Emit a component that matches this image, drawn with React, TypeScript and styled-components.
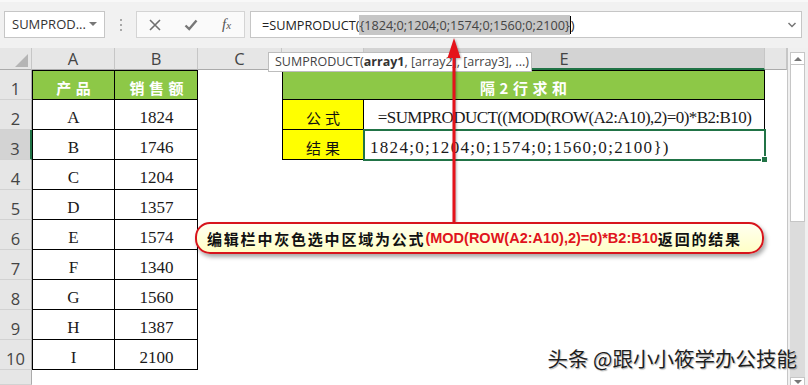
import React from "react";
import styled, { createGlobalStyle, css } from "styled-components";

const UI = `"Open Sans", "Noto Sans", "Noto Sans CJK SC", sans-serif`;
const CJK = `"Noto Sans CJK SC", sans-serif`;
const SONG = `"Liberation Serif", "Noto Sans CJK SC", serif`;
const GREEN = "#8dc847";
const EXCEL = "#217346";
const RED = "#e5131b";

const products = [
  { letter: "A", value: 1824 },
  { letter: "B", value: 1746 },
  { letter: "C", value: 1204 },
  { letter: "D", value: 1357 },
  { letter: "E", value: 1574 },
  { letter: "F", value: 1340 },
  { letter: "G", value: 1560 },
  { letter: "H", value: 1387 },
  { letter: "I", value: 2100 },
];

// column D's letter sits under the function tooltip, so it is left blank
const columns = ["A", "B", "C", "", "E", ""];

const GlobalStyle = createGlobalStyle`
  html, body { margin: 0; padding: 0; }
  body {
    width: 808px;
    height: 385px;
    overflow: hidden;
    background: #fff;
    font-family: ${UI};
  }
`;

export default function App() {
  return (
    <>
      <GlobalStyle />
      <Window>
        <Toolbar>
          <NameBox>
            <span>SUMPROD...</span>
            <Caret />
          </NameBox>
          <Grip>
            <Dot />
            <Dot />
            <Dot />
          </Grip>
          <FxGroup>
            <IconSlot>
              <svg width="12" height="12" viewBox="0 0 12 12">
                <path d="M1 1L11 11M11 1L1 11" stroke="#6f6f6f" strokeWidth="1.6" />
              </svg>
            </IconSlot>
            <IconSlot>
              <svg width="14" height="12" viewBox="0 0 14 12">
                <path d="M1.5 6.5L5.2 10L12.5 1.5" stroke="#777" strokeWidth="2.4" fill="none" />
              </svg>
            </IconSlot>
            <IconSlot>
              <Fx>
                f<small>x</small>
              </Fx>
            </IconSlot>
          </FxGroup>
          <FormulaInput>
            <FormulaText>
              =SUMPRODUCT(<Selected>{"{1824;0;1204;0;1574;0;1560;0;2100}"}</Selected>
              <Cursor />)
            </FormulaText>
            <svg width="10" height="8" viewBox="0 0 10 8">
              <path d="M1.5 2L5 5.5L8.5 2" stroke="#777" strokeWidth="1.5" fill="none" />
            </svg>
          </FormulaInput>
        </Toolbar>

        <Sheet>
          <Corner />
          {columns.map((c, i) => (
            <ColHead key={i} $active={i === 4}>
              {c}
            </ColHead>
          ))}
          <ScrollColumn>
            <ScrollUp />
            <ScrollTrack>
              <ScrollThumb />
            </ScrollTrack>
            <ScrollDown />
          </ScrollColumn>

          <RowHead>1</RowHead>
          <HeadCell $left $top>产品</HeadCell>
          <HeadCell $top>销售额</HeadCell>
          <Blank />
          <HeadCell $left $top $span={2}>隔2行求和</HeadCell>
          <Blank />

          {products.map((p, i) => {
            const r = i + 2;
            return (
              <React.Fragment key={r}>
                <RowHead $active={r === 3}>{r}</RowHead>
                <DataCell $left>{p.letter}</DataCell>
                <DataCell>{p.value}</DataCell>
                <Blank />
                {r === 2 && (
                  <>
                    <LabelCell $left>公式</LabelCell>
                    <DataCell $spacing={-0.57}>=SUMPRODUCT((MOD(ROW(A2:A10),2)=0)*B2:B10)</DataCell>
                  </>
                )}
                {r === 3 && (
                  <>
                    <LabelCell $left>结果</LabelCell>
                    <ActiveCell>{"1824;0;1204;0;1574;0;1560;0;2100})"}</ActiveCell>
                  </>
                )}
                {r > 3 && (
                  <>
                    <Blank />
                    <Blank />
                  </>
                )}
                <Blank />
              </React.Fragment>
            );
          })}

          <RowHead />
          {[0, 1, 2, 3, 4, 5].map((k) => (
            <Blank key={k} />
          ))}
        </Sheet>

        <Tooltip>
          SUMPRODUCT(<b>array1</b>, [array2], [array3], ...)
        </Tooltip>

        <Arrow width="20" height="190" viewBox="0 0 20 190">
          <path d="M10 22V188" stroke={RED} strokeWidth="3" />
          <path d="M10 4L16.5 24H3.5Z" fill={RED} />
        </Arrow>

        <Callout>
          编辑栏中灰色选中区域为公式<RedText>(MOD(ROW(A2:A10),2)=0)*B2:B10</RedText>返回的结果
        </Callout>

        <Watermark>头条 @跟小小筱学办公技能</Watermark>
      </Window>
    </>
  );
}

const Window = styled.div`
  position: relative;
  width: 808px;
  height: 385px;
  display: flex;
  flex-direction: column;
  overflow: hidden;
`;

/* ---------- formula bar ---------- */

const Toolbar = styled.div`
  height: 48px;
  box-sizing: border-box;
  padding: 9px 0 0 4px;
  display: flex;
  align-items: flex-start;
  background: #f1f1f1;
  border-top: 2px solid #f8f8f8;
`;

const NameBox = styled.div`
  width: 101px;
  height: 27px;
  box-sizing: border-box;
  border: 1px solid #c6c6c6;
  background: #fff;
  display: flex;
  align-items: center;
  justify-content: space-between;
  padding: 0 7px 1px 7px;
  font: 13px ${UI};
  color: #333;
`;

const Caret = styled.i`
  width: 0;
  height: 0;
  border-left: 4px solid transparent;
  border-right: 4px solid transparent;
  border-top: 4px solid #777;
`;

const Grip = styled.div`
  width: 31px;
  height: 27px;
  display: flex;
  flex-direction: column;
  align-items: center;
  justify-content: center;
  gap: 3px;
`;

const Dot = styled.i`
  width: 2px;
  height: 2px;
  background: #a8a8a8;
`;

const FxGroup = styled.div`
  width: 109px;
  height: 27px;
  box-sizing: border-box;
  border: 1px solid #d4d4d4;
  background: #fafafa;
  display: grid;
  grid-template-columns: 36px 36px 1fr;
`;

const IconSlot = styled.div`
  display: flex;
  align-items: center;
  justify-content: center;
`;

const Fx = styled.span`
  font: italic 15px "Liberation Serif", serif;
  color: #555;
  small {
    font-size: 11px;
  }
`;

const FormulaInput = styled.div`
  margin-left: 5px;
  width: 552px;
  height: 27px;
  box-sizing: border-box;
  border: 1px solid #c6c6c6;
  background: #fff;
  display: flex;
  align-items: center;
  justify-content: space-between;
  padding: 0 4px 0 11px;
`;

const FormulaText = styled.div`
  font: 12.7px ${UI};
  color: #222;
  display: flex;
  align-items: center;
  white-space: pre;
`;

const Selected = styled.span`
  background: #c6c6c6;
  color: #444;
  line-height: 20px;
`;

const Cursor = styled.i`
  width: 1px;
  height: 18px;
  background: #000;
`;

/* ---------- sheet grid ---------- */

const Sheet = styled.div`
  flex: 1;
  display: grid;
  grid-template-columns: 32px 83px 83px 84px 82px 401px 22px 21px;
  grid-template-rows: 22px repeat(10, 30px) 1fr;
  background: #fff;
`;

const Corner = styled.div`
  position: relative;
  background: #e6e6e6;
  border-right: 1px solid #c6c6c6;
  border-bottom: 1px solid #ababab;
  &::after {
    content: "";
    position: absolute;
    right: 3px;
    bottom: 2px;
    border-left: 13px solid transparent;
    border-bottom: 13px solid #b5b5b5;
  }
`;

const ColHead = styled.div<{ $active?: boolean }>`
  display: flex;
  align-items: center;
  justify-content: center;
  background: ${(p) => (p.$active ? "#d3d3d3" : "#e6e6e6")};
  border-right: 1px solid #c6c6c6;
  border-bottom: ${(p) => (p.$active ? `2px solid ${EXCEL}` : "1px solid #ababab")};
  font: 16.5px ${UI};
  color: #444;
`;

const RowHead = styled.div<{ $active?: boolean }>`
  display: flex;
  align-items: center;
  justify-content: center;
  padding-top: 8px;
  box-sizing: border-box;
  background: ${(p) => (p.$active ? "#d3d3d3" : "#e6e6e6")};
  border-bottom: 1px solid #d2d2d2;
  border-right: ${(p) => (p.$active ? `2px solid ${EXCEL}` : "1px solid #ababab")};
  font: 16.5px ${UI};
  color: #444;
`;

const Blank = styled.div`
  background: #fff;
`;

type CellProps = { $left?: boolean; $top?: boolean; $span?: number; $spacing?: number };

const tableCell = css<CellProps>`
  display: flex;
  align-items: center;
  justify-content: center;
  padding-top: 5px;
  box-sizing: border-box;
  white-space: nowrap;
  grid-column: span ${(p) => p.$span ?? 1};
  box-shadow: inset -1px -1px 0 #000 ${(p) => (p.$left ? ", inset 1px 0 0 #000" : "")}
    ${(p) => (p.$top ? ", inset 0 1px 0 #000" : "")};
`;

const HeadCell = styled.div<CellProps>`
  ${tableCell};
  background: ${GREEN};
  color: #fff;
  font: 700 15px ${CJK};
  letter-spacing: 4.5px;
  text-indent: 4.5px;
`;

const LabelCell = styled.div<CellProps>`
  ${tableCell};
  background: #ffff00;
  color: #111;
  font: 15px ${CJK};
  letter-spacing: 4px;
  text-indent: 4px;
`;

const DataCell = styled.div<CellProps>`
  ${tableCell};
  background: #fff;
  color: #1a1a1a;
  font: 17px ${SONG};
  letter-spacing: ${(p) => p.$spacing ?? 0}px;
`;

const ActiveCell = styled.div`
  position: relative;
  z-index: 1;
  display: flex;
  align-items: center;
  padding: 5px 0 0 6px;
  box-sizing: border-box;
  white-space: nowrap;
  background: #fff;
  outline: 2px solid ${EXCEL};
  outline-offset: -1px;
  font: 17px ${SONG};
  letter-spacing: 1.3px;
  color: #1a1a1a;
  &::after {
    content: "";
    position: absolute;
    right: -3px;
    bottom: -3px;
    width: 5px;
    height: 5px;
    background: ${EXCEL};
    border: 1px solid #fff;
  }
`;

/* ---------- scrollbar ---------- */

const ScrollColumn = styled.div`
  grid-column: 8;
  grid-row: 1 / -1;
  display: flex;
  flex-direction: column;
  padding: 4px 3px 0 2px;
  background: #f0f0f0;
  border-left: 1px solid #c6c6c6;
  box-sizing: border-box;
`;

const ScrollUp = styled.div`
  height: 13px;
  box-sizing: border-box;
  background: #fff;
  border: 1px solid #c6c6c6;
  display: flex;
  align-items: center;
  justify-content: center;
  &::after {
    content: "";
    border-left: 4px solid transparent;
    border-right: 4px solid transparent;
    border-bottom: 4px solid #777;
  }
`;

const ScrollTrack = styled.div`
  flex: 1;
  background: #dcdcdc;
`;

const ScrollThumb = styled.div`
  height: 157px;
  box-sizing: border-box;
  background: #fff;
  border: 1px solid #c6c6c6;
  border-top: none;
`;

const ScrollDown = styled(ScrollUp)`
  height: 8px;
  border-bottom: none;
  &::after {
    border-bottom: none;
    border-top: 4px solid #777;
  }
`;

/* ---------- overlays ---------- */

const Tooltip = styled.div`
  position: absolute;
  left: 268px;
  top: 52px;
  width: 264px;
  height: 20px;
  box-sizing: border-box;
  padding-left: 6px;
  background: #fff;
  border: 1px solid #bdbdbd;
  font: 12.5px/18px ${UI};
  color: #444;
  white-space: nowrap;
  b {
    font-weight: 700;
    color: #333;
  }
`;

const Arrow = styled.svg`
  position: absolute;
  left: 444px;
  top: 34px;
  z-index: 2;
  filter: drop-shadow(1px 1px 1px rgba(0, 0, 0, 0.3));
`;

const Callout = styled.div`
  position: absolute;
  left: 195px;
  top: 222px;
  width: 569px;
  height: 32px;
  box-sizing: border-box;
  z-index: 3;
  display: flex;
  align-items: center;
  padding-left: 10px;
  border: 2px solid #d7141c;
  border-radius: 15px;
  background: linear-gradient(#fffff0, #ffffc6);
  box-shadow: 2px 3px 4px rgba(0, 0, 0, 0.35);
  font: 700 15px ${CJK};
  letter-spacing: 1.8px;
  color: #111;
  white-space: nowrap;
`;

const RedText = styled.span`
  font: 700 14.5px "Liberation Sans", Arial, sans-serif;
  letter-spacing: 0;
  color: #e0141c;
`;

const Watermark = styled.div`
  position: absolute;
  right: 11px;
  top: 343px;
  z-index: 4;
  font: 20.5px ${CJK};
  color: #1e1e1e;
  white-space: nowrap;
  text-shadow: 0 0 2px #fff, 1px 1px 1px rgba(0, 0, 0, 0.35);
`;
